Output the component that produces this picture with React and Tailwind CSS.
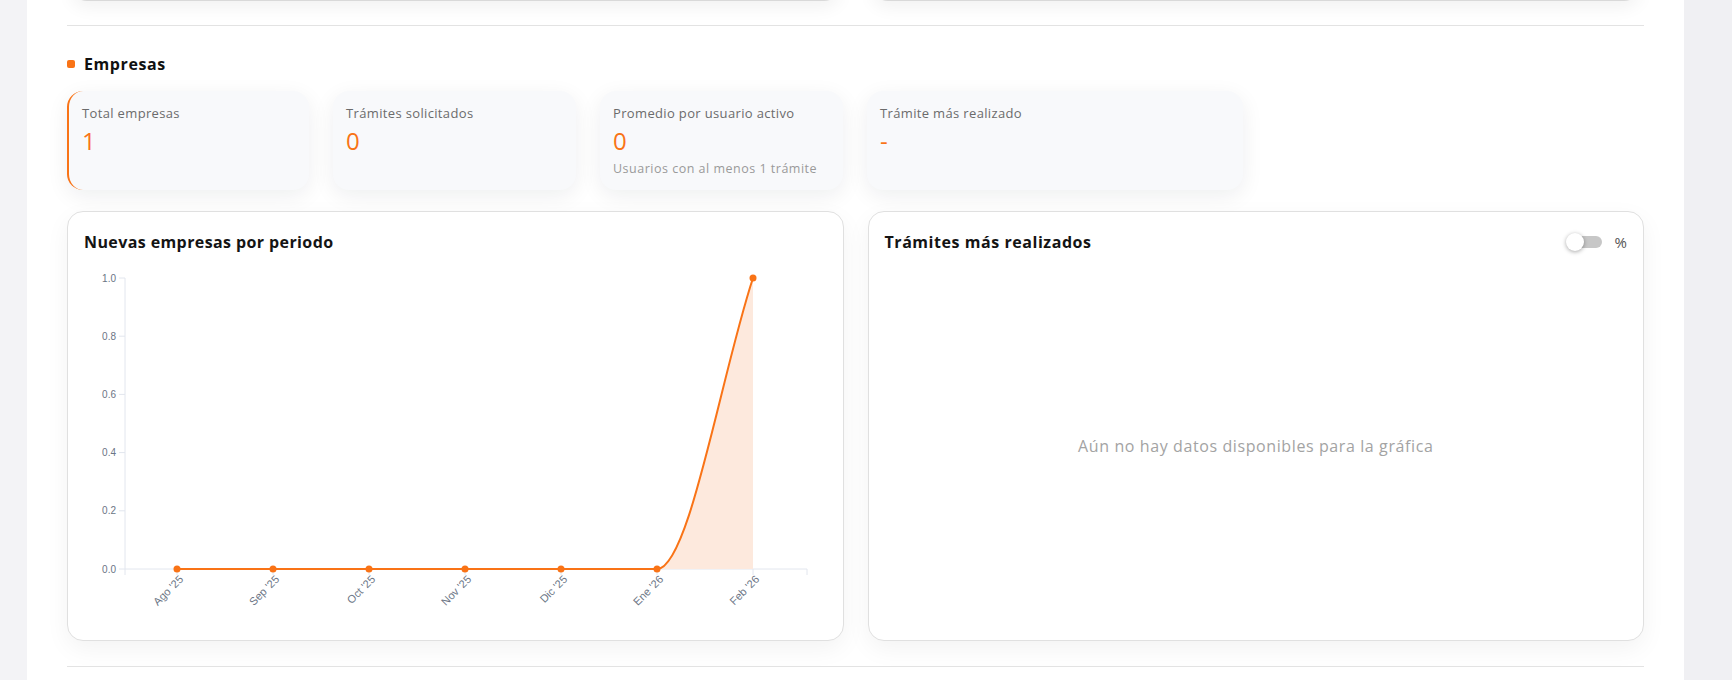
import React from "react";

const FONT = { fontFamily: '"Open Sans", "Noto Sans", sans-serif' };

function StatCard({ label, value, sub, accent, width }) {
  return (
    <div
      className={`${width} h-[99px] shrink-0 rounded-2xl bg-[#f8f9fb] shadow-[0_6px_22px_rgba(15,23,42,0.07)] pt-3 ${
        accent ? "border-l-2 border-[#f97316] pl-[13px]" : "pl-[13px]"
      }`}
    >
      <div className="text-[13px] leading-5 tracking-[0.35px] text-[#6b6b6b]">{label}</div>
      <div className="mt-0.5 text-[24px] leading-8 text-[#f97316]">{value}</div>
      {sub && <div className="mt-1 text-[12.5px] leading-4 tracking-[0.5px] text-[#9a9a9a]">{sub}</div>}
    </div>
  );
}

function LineChart() {
  const xs = [93, 189, 285, 381, 477, 573, 669];
  const labels = ["Ago '25", "Sep '25", "Oct '25", "Nov '25", "Dic '25", "Ene '26", "Feb '26"];
  const y0 = 309;
  const y1 = 18;
  const ticks = [1.0, 0.8, 0.6, 0.4, 0.2, 0.0];
  const curve = `M ${xs[0]} ${y0} L ${xs[5]} ${y0} C ${xs[5] + 32} ${y0} ${xs[6] - 32} ${y1 + 97} ${xs[6]} ${y1}`;
  const fill = `M ${xs[5]} ${y0} C ${xs[5] + 32} ${y0} ${xs[6] - 32} ${y1 + 97} ${xs[6]} ${y1} L ${xs[6]} ${y0} Z`;
  return (
    <svg width="742" height="360" className="block" style={{ fontFamily: '"Liberation Sans", Arial, sans-serif' }}>
      <line x1="41" y1={y1} x2="41" y2={y0 + 6} stroke="#e2e6ee" strokeWidth="1" />
      {ticks.map((t, i) => {
        const y = y1 + (1 - t) * (y0 - y1);
        return (
          <g key={i}>
            <line x1="35" y1={y} x2="41" y2={y} stroke="#e2e6ee" strokeWidth="1" />
            <text x="32" y={y + 3.5} textAnchor="end" fontSize="10" fill="#6b7585">
              {t.toFixed(1)}
            </text>
          </g>
        );
      })}
      <line x1="41" y1={y0} x2="723" y2={y0} stroke="#e2e6ee" strokeWidth="1" />
      <line x1="723" y1={y0} x2="723" y2={y0 + 6} stroke="#e2e6ee" strokeWidth="1" />
      {xs.map((x, i) => (
        <line key={i} x1={x} y1={y0} x2={x} y2={y0 + 6} stroke="#e2e6ee" strokeWidth="1" />
      ))}
      <path d={fill} fill="#fde9dd" />
      <path d={curve} fill="none" stroke="#f97316" strokeWidth="2" />
      {xs.map((x, i) => (
        <circle key={i} cx={x} cy={i === 6 ? y1 : y0} r="3.5" fill="#f97316" />
      ))}
      {xs.map((x, i) => (
        <text
          key={i}
          x={x + 7}
          y={y0 + 11}
          textAnchor="end"
          fontSize="11"
          fill="#6b7585"
          transform={`rotate(-45 ${x + 7} ${y0 + 11})`}
        >
          {labels[i]}
        </text>
      ))}
    </svg>
  );
}

export default function App() {
  return (
    <div className="flex h-[680px] w-full overflow-hidden bg-[#f3f3f6]" style={FONT}>
      <div className="w-[27px] shrink-0" />
      <main className="w-[1657px] shrink-0 bg-white px-10">
        <div className="-mt-[20px] grid grid-cols-2 gap-8 px-1">
          <div className="h-[21px] rounded-b-2xl border border-t-0 border-[#d9d9d9] bg-white shadow-[0_6px_18px_rgba(0,0,0,0.06)]" />
          <div className="h-[21px] rounded-b-2xl border border-t-0 border-[#d9d9d9] bg-white shadow-[0_6px_18px_rgba(0,0,0,0.06)]" />
        </div>
        <div className="mt-6 border-t border-[#e3e3e3]" />

        <div className="mt-[26px] flex h-6 items-center gap-[9px]">
          <div className="h-2 w-2 rounded-[2px] bg-[#f97316]" />
          <div className="text-[16px] font-bold tracking-[0.6px] text-[#111111]">Empresas</div>
        </div>

        <div className="mt-[15px] flex gap-6">
          <StatCard width="w-[242px]" label="Total empresas" value="1" accent />
          <StatCard width="w-[243px]" label="Trámites solicitados" value="0" />
          <StatCard
            width="w-[243px]"
            label="Promedio por usuario activo"
            value="0"
            sub="Usuarios con al menos 1 trámite"
          />
          <StatCard width="w-[376px]" label="Trámite más realizado" value="-" />
        </div>

        <div className="mt-[21px] grid h-[430px] grid-cols-2 gap-6">
          <div className="flex flex-col rounded-2xl border border-[#e0e0e0] bg-white px-4 pt-5 shadow-[0_8px_24px_rgba(0,0,0,0.05)]">
            <div className="text-[16px] font-bold leading-5 tracking-[0.4px] text-[#141414]">
              Nuevas empresas por periodo
            </div>
            <div className="mt-2">
              <LineChart />
            </div>
          </div>
          <div className="flex flex-col rounded-2xl border border-[#e0e0e0] bg-white px-4 pt-5 shadow-[0_8px_24px_rgba(0,0,0,0.05)]">
            <div className="flex h-5 items-center justify-between">
              <div className="text-[16px] font-bold leading-5 tracking-[0.55px] text-[#141414]">
                Trámites más realizados
              </div>
              <div className="flex items-center gap-[13px]">
                <div className="relative h-3 w-[34px] rounded-full bg-[#c7c7c7]">
                  <div className="absolute -left-[2px] -top-[3px] h-[18px] w-[18px] rounded-full bg-white shadow-[0_1px_4px_rgba(0,0,0,0.35)]" />
                </div>
                <div className="text-[15px] text-[#555555]">%</div>
              </div>
            </div>
            <div className="flex flex-1 items-center justify-center">
              <div className="text-[16px] tracking-[0.6px] text-[#a3a3a3]">
                Aún no hay datos disponibles para la gráfica
              </div>
            </div>
          </div>
        </div>

        <div className="mt-[25px] border-t border-[#e3e3e3]" />
      </main>
      <div className="flex-1 bg-[#f0f0f3]" />
    </div>
  );
}
